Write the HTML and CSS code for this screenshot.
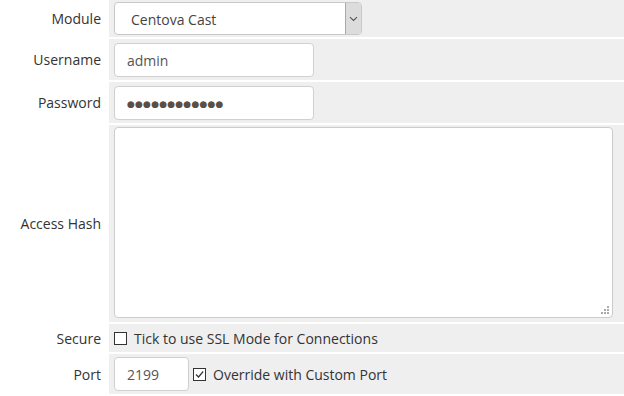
FILE: index.html
```
<!DOCTYPE html>
<html>
<head>
<meta charset="utf-8">
<link rel="stylesheet" href="styles.css">
</head>
<body>
<div class="form">
  <div class="row r-module">
    <div class="label">Module</div>
    <div class="field">
      <div class="select">
        <span class="select-text">Centova Cast</span>
        <span class="select-btn"><svg width="9" height="6" viewBox="0 0 9 6"><path d="M1 1.2 L4.5 4.5 L8 1.2" fill="none" stroke="#555" stroke-width="1.1"/></svg></span>
      </div>
    </div>
  </div>
  <div class="row r-input">
    <div class="label">Username</div>
    <div class="field"><div class="input">admin</div></div>
  </div>
  <div class="row r-input">
    <div class="label">Password</div>
    <div class="field"><div class="input dots">●●●●●●●●●●●●</div></div>
  </div>
  <div class="row r-hash">
    <div class="label">Access Hash</div>
    <div class="field">
      <div class="textarea"><svg class="grip" width="8" height="8" viewBox="0 0 8 8"><g fill="#aaa"><rect x="6" y="0" width="2" height="2"/><rect x="3" y="3" width="2" height="2"/><rect x="6" y="3" width="2" height="2"/><rect x="0" y="6" width="2" height="2"/><rect x="3" y="6" width="2" height="2"/><rect x="6" y="6" width="2" height="2"/></g></svg></div>
    </div>
  </div>
  <div class="row r-secure">
    <div class="label">Secure</div>
    <div class="field"><span class="check"></span><span class="check-label">Tick to use SSL Mode for Connections</span></div>
  </div>
  <div class="row r-port">
    <div class="label">Port</div>
    <div class="field">
      <div class="input port">2199</div>
      <span class="check checked"><svg width="11" height="11" viewBox="0 0 11 11"><path d="M2 5.5 L4.5 8 L9.2 2.5" fill="none" stroke="#333" stroke-width="1.2"/></svg></span><span class="check-label">Override with Custom Port</span>
    </div>
  </div>
</div>
</body>
</html>
```
FILE: styles.css
```
html, body {
  margin: 0;
  padding: 0;
  background: #fff;
}
body {
  font-family: "Open Sans", "DejaVu Sans", sans-serif;
  font-size: 14px;
  color: #333;
}
.form {
  display: flex;
  flex-direction: column;
  gap: 2px;
  width: 624px;
}
.row {
  display: flex;
}
.label {
  width: 101px;
  padding-right: 8px;
  text-align: right;
  display: flex;
  align-items: center;
  justify-content: flex-end;
  color: #333;
}
.field {
  flex: 1;
  background: #efefef;
  display: flex;
  align-items: center;
  padding-left: 5px;
}
.r-module { height: 37px; }
.r-module .field { align-items: flex-start; padding-top: 2px; }
.select {
  width: 246px;
  height: 31px;
  border: 1px solid #c8c8c8;
  border-radius: 4px;
  background: #fff;
  display: flex;
  align-items: center;
  overflow: hidden;
  color: #444;
}
.select-text {
  flex: 1;
  padding-left: 16px;
  padding-top: 1px;
}
.select-btn {
  width: 15px;
  height: 31px;
  background: #dcdcdc;
  border-left: 1px solid #a8a8a8;
  display: flex;
  align-items: center;
  justify-content: center;
}
.r-input { height: 41px; }
.r-input .field { align-items: flex-start; padding-top: 4px; }
.input {
  width: 186px;
  height: 32px;
  border: 1px solid #d0d0d0;
  border-radius: 4px;
  background: #fff;
  padding-left: 12px;
  display: flex;
  align-items: center;
  color: #555;
  box-sizing: content-box;
}
.dots {
  font-family: "DejaVu Sans", sans-serif;
  font-size: 9px;
  letter-spacing: 0.2px;
  color: #5a4f48;
  padding-top: 1px;
  height: 31px;
}
.r-hash { height: 197px; }
.r-hash .field { align-items: flex-start; padding-top: 2px; }
.textarea {
  position: relative;
  width: 497px;
  height: 189px;
  border: 1px solid #ccc;
  border-radius: 4px;
  background: #fff;
}
.grip {
  position: absolute;
  right: 3px;
  bottom: 3px;
}
.r-secure { height: 28px; }
.check {
  width: 11px;
  height: 11px;
  border: 1px solid #333;
  background: #fff;
  display: inline-flex;
  align-items: center;
  justify-content: center;
  flex: none;
}
.check-label {
  margin-left: 7px;
  color: #333;
}
.r-port { height: 40px; }
.r-port .field { padding-top: 0; }
.input.port {
  width: 61px;
  margin-right: 4px;
}
```
